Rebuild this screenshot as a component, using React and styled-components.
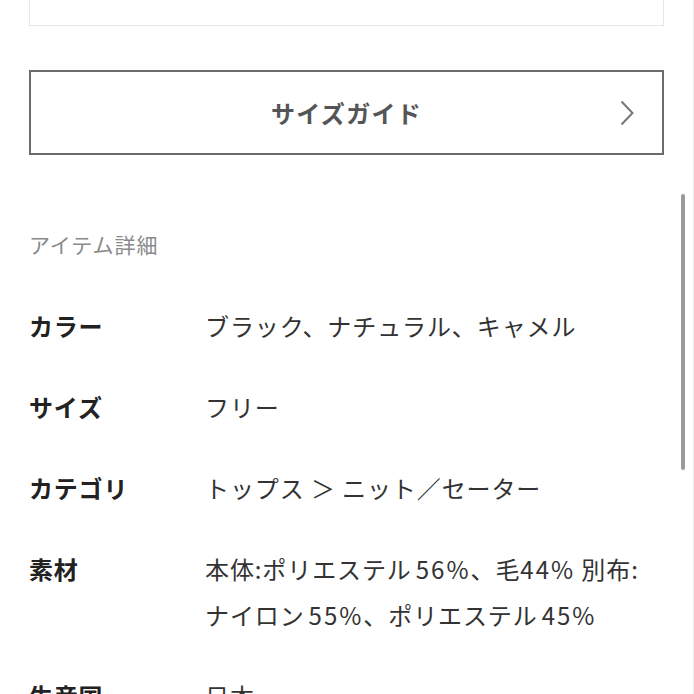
import React from "react";
import styled, { createGlobalStyle } from "styled-components";

const Global = createGlobalStyle`
  html, body { margin: 0; padding: 0; background: #fff; }
  body { font-family: "Noto Sans CJK JP", "Noto Sans", sans-serif; overflow: hidden; }
`;

const Page = styled.div`
  position: relative;
  box-sizing: border-box;
  width: 694px;
  height: 694px;
  overflow: hidden;
  border-right: 1px solid #ececec;
  padding: 0 29px;
`;

const TopCard = styled.div`
  box-sizing: border-box;
  height: 26px;
  border: 1px solid #e6e6e6;
  border-top: none;
`;

const GuideButton = styled.button`
  box-sizing: border-box;
  position: relative;
  display: flex;
  align-items: center;
  justify-content: center;
  width: 100%;
  height: 85px;
  margin-top: 44px;
  background: #fff;
  border: 2px solid #6b6b6b;
  font-family: inherit;
  font-size: 24px;
  letter-spacing: 1.3px;
  font-weight: 700;
  color: #555;
  padding: 0;
`;

const Chevron = styled.svg`
  position: absolute;
  right: 28px;
  top: 50%;
  transform: translateY(-50%);
`;

const SectionTitle = styled.div`
  margin-top: 74px;
  font-size: 21px;
  letter-spacing: 0.9px;
  line-height: 30px;
  color: #8a8a8a;
`;

const SpecList = styled.dl`
  display: grid;
  grid-template-columns: 176px 1fr;
  row-gap: 35px;
  margin: 44px 0 0;
`;

const Label = styled.dt`
  margin: 0;
  font-size: 24px;
  letter-spacing: 0.8px;
  line-height: 46px;
  font-weight: 700;
  color: #222;
`;

const Value = styled.dd`
  margin: 0;
  font-size: 24px;
  letter-spacing: 0.9px;
  line-height: 46px;
  font-weight: 400;
  color: #333;
`;

const Num = styled.span`
  padding-left: ${(p) => (p.$gap ? "4px" : "0")};
  letter-spacing: 2px;
`;

const ScrollThumb = styled.div`
  position: absolute;
  right: 8px;
  top: 194px;
  width: 4px;
  height: 276px;
  border-radius: 2px;
  background: #9a9a9a;
`;

const specs = [
  ["カラー", ["ブラック、ナチュラル、キャメル"]],
  ["サイズ", ["フリー"]],
  ["カテゴリ", ["トップス ＞ ニット／セーター"]],
  [
    "素材",
    [
      <>本体:ポリエステル<Num $gap>56%</Num>、毛<Num>44%</Num> 別布:</>,
      <>ナイロン<Num $gap>55%</Num>、ポリエステル<Num $gap>45%</Num></>,
    ],
  ],
  ["生産国", ["日本"]],
];

export default function App() {
  return (
    <>
      <Global />
      <Page>
        <TopCard />
        <GuideButton>
          サイズガイド
          <Chevron width="14" height="26" viewBox="0 0 14 26">
            <path d="M1.5 1.5 L12.5 13 L1.5 24.5" fill="none" stroke="#777" strokeWidth="2" />
          </Chevron>
        </GuideButton>
        <SectionTitle>アイテム詳細</SectionTitle>
        <SpecList>
          {specs.map(([k, lines]) => (
            <React.Fragment key={k}>
              <Label>{k}</Label>
              <Value>
                {lines.map((l, i) => (
                  <React.Fragment key={i}>
                    {i > 0 && <br />}
                    {l}
                  </React.Fragment>
                ))}
              </Value>
            </React.Fragment>
          ))}
        </SpecList>
        <ScrollThumb />
      </Page>
    </>
  );
}
